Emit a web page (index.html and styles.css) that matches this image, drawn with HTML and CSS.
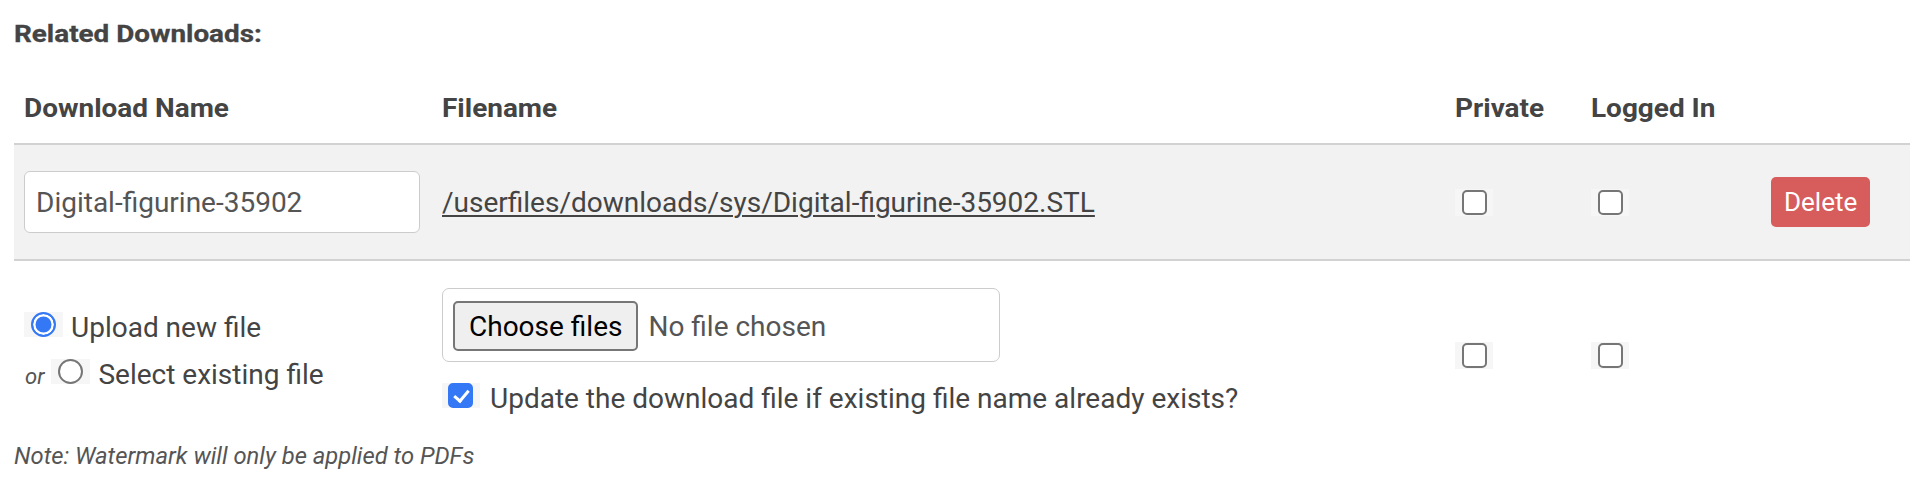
FILE: index.html
```html
<!DOCTYPE html>
<html lang="en">
<head>
<meta charset="utf-8">
<title>Related Downloads</title>
<link rel="stylesheet" href="styles.css">
</head>
<body>
<div class="page">
  <h3 class="title"><span class="wide-title">Related Downloads:</span></h3>
  <div class="downloads">
    <div class="row head">
      <div class="cell"><span class="th">Download Name</span></div>
      <div class="cell"><span class="th">Filename</span></div>
      <div class="cell"><span class="th">Private</span></div>
      <div class="cell"><span class="th">Logged In</span></div>
      <div class="cell"></div>
    </div>
    <div class="row item">
      <div class="cell"><input class="text-input" type="text" value="Digital-figurine-35902"></div>
      <div class="cell"><a class="file-link" href="#">/userfiles/downloads/sys/Digital-figurine-35902.STL</a></div>
      <div class="cell"><span class="cb-wrap"><input class="cb" type="checkbox"></span></div>
      <div class="cell"><span class="cb-wrap"><input class="cb" type="checkbox"></span></div>
      <div class="cell"><button class="btn-delete" type="button">Delete</button></div>
    </div>
    <div class="row new">
      <div class="cell source">
        <div class="opt"><span class="rb-wrap"><input class="rb" type="radio" name="src" checked></span><span class="opt-label">Upload new file</span></div>
        <div class="opt"><em class="or">or</em><span class="rb-wrap"><input class="rb" type="radio" name="src"></span><span class="opt-label">Select existing file</span></div>
      </div>
      <div class="cell upload">
        <div class="filebox"><span class="choose-btn">Choose files</span><span class="no-file">No file chosen</span></div>
        <div class="update"><span class="cb-wrap"><input class="cb" type="checkbox" checked></span><span class="update-label">Update the download file if existing file name already exists?</span></div>
      </div>
      <div class="cell lower"><span class="cb-wrap"><input class="cb" type="checkbox"></span></div>
      <div class="cell lower"><span class="cb-wrap"><input class="cb" type="checkbox"></span></div>
      <div class="cell"></div>
    </div>
  </div>
  <p class="note">Note: Watermark will only be applied to PDFs</p>
</div>
</body>
</html>
```

FILE: styles.css
```css
html, body {
  margin: 0;
  padding: 0;
  background: #fff;
}

body {
  font-family: Roboto, "Liberation Sans", Arial, sans-serif;
  color: #444;
}

.page {
  padding: 0 10px 0 14px;
}

.title {
  margin: 21px 0 0;
  font-size: 24px;
  line-height: 26px;
  font-weight: 700;
  color: #444;
}

.wide-title {
  display: inline-block;
  white-space: nowrap;
  transform: scaleX(1.16);
  transform-origin: 0 50%;
  -webkit-text-stroke: 0.3px #444;
}

.row {
  display: grid;
  grid-template-columns: 418px 1013px 136px 180px 1fr;
}

.cell {
  padding: 0 10px;
  min-width: 0;
}

.head {
  padding: 46px 0 20px;
  font-size: 26px;
  line-height: 30px;
  font-weight: 700;
  color: #444;
  border-bottom: 2px solid #d2d2d2;
}

.th {
  display: inline-block;
  white-space: nowrap;
  transform: scaleX(1.075);
  transform-origin: 0 50%;
}

.item {
  height: 114px;
  align-items: center;
  background: #f2f2f2;
  border-bottom: 2px solid #d2d2d2;
}

.item .cell {
  display: flex;
  align-items: center;
}

.text-input {
  box-sizing: border-box;
  width: 396px;
  height: 62px;
  margin: 0;
  padding: 0 11px;
  border: 1.5px solid #ccc;
  border-radius: 6px;
  background: #fff;
  font-family: inherit;
  font-size: 28px;
  color: #555;
  outline: none;
}

.file-link {
  font-size: 28px;
  color: #444;
  text-decoration: underline;
  text-decoration-thickness: 1.5px;
  text-underline-offset: 3px;
}

.cb-wrap,
.rb-wrap {
  display: inline-block;
  height: 25px;
  background: #f6f6f6;
}

.cb-wrap {
  padding: 1px 6px 1px 7px;
}

.rb-wrap {
  padding: 0 7px;
  margin-right: 8px;
}

.cb,
.rb {
  -webkit-appearance: none;
  appearance: none;
  display: block;
  box-sizing: border-box;
  width: 25px;
  height: 25px;
  margin: 0;
  border: 2px solid #767676;
  background: #fff;
  position: relative;
}

.cb {
  border-radius: 5px;
}

.cb:checked {
  background: #3478f6;
  border-color: #3478f6;
}

.cb:checked::after {
  content: "";
  position: absolute;
  left: 6.5px;
  top: 1.5px;
  width: 6px;
  height: 12px;
  border-right: 3.5px solid #fff;
  border-bottom: 3.5px solid #fff;
  transform: rotate(40deg);
}

.rb {
  border-radius: 50%;
}

.rb:checked {
  border-color: #3478f6;
  background: #3478f6;
  box-shadow: inset 0 0 0 2.5px #fff;
}

.btn-delete {
  height: 50px;
  margin: 0;
  padding: 0 13px;
  border: none;
  border-radius: 5px;
  background: #d75c5c;
  color: #fff;
  font-family: inherit;
  font-size: 26px;
  cursor: pointer;
}

.new {
  padding: 27px 0;
  align-items: center;
}

.source {
  font-size: 28px;
}

.opt {
  line-height: 47px;
  white-space: nowrap;
}

.opt-label {
  color: #444;
}

.or {
  font-size: 22px;
  color: #555;
  margin-left: 1px;
  margin-right: 7px;
}

.filebox {
  box-sizing: border-box;
  display: flex;
  align-items: center;
  width: 558px;
  height: 74px;
  padding: 2px 0 0 10px;
  border: 1.5px solid #ccc;
  border-radius: 7px;
  font-size: 28px;
}

.choose-btn {
  box-sizing: border-box;
  display: inline-flex;
  align-items: center;
  height: 50px;
  padding: 0 14px;
  border: 2px solid #767676;
  border-radius: 5px;
  background: #efefef;
  color: #000;
}

.no-file {
  margin-left: 10px;
  color: #555;
}

.update {
  margin-top: 20px;
  font-size: 28px;
  line-height: 33px;
  white-space: nowrap;
}

.update .cb-wrap {
  padding: 0 7px 0 6px;
  margin-right: 10px;
}

.update-label {
  color: #444;
}

.lower {
  margin-top: 12px;
}

.note {
  margin: 0;
  font-size: 23.8px;
  font-style: italic;
  color: #555;
}
```
